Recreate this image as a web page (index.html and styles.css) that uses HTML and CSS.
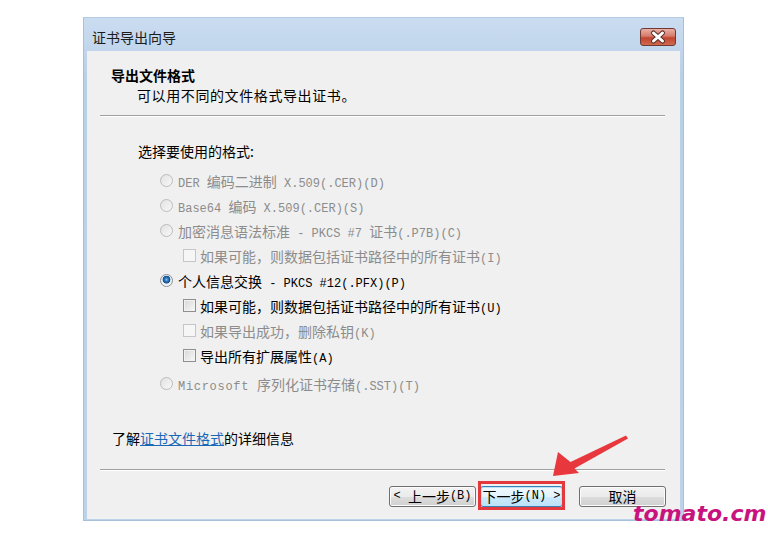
FILE: index.html
```html
<!DOCTYPE html>
<html lang="zh-CN">
<head>
    <meta charset="UTF-8">
    <title>证书导出向导</title>
    <link rel="stylesheet" href="styles.css">
</head>
<body>
    <div class="window">
        <div class="titlebar">
            <span class="title">证书导出向导</span>
            <div class="close">
                <svg width="34" height="16" viewBox="0 0 34 16">
                    <path d="M12.5 4 L21.5 12 M21.5 4 L12.5 12" stroke="#5b3029" stroke-width="5" stroke-linecap="round"/>
                    <path d="M12.5 4 L21.5 12 M21.5 4 L12.5 12" stroke="#ffffff" stroke-width="3" stroke-linecap="round"/>
                </svg>
            </div>
        </div>
        <div class="panel">
            <div class="header">
                <div class="header-title">导出文件格式</div>
                <div class="header-desc">可以用不同的文件格式导出证书。</div>
            </div>
            <div class="sep"></div>

            <div class="prompt">选择要使用的格式:</div>
            <div class="options">
                <div class="opt disabled"><span class="rb"></span><span><span class="en">DER </span>编码二进制<span class="en"> X.509(.CER)(D)</span></span></div>
                <div class="opt disabled"><span class="rb"></span><span><span class="en">Base64 </span>编码<span class="en"> X.509(.CER)(S)</span></span></div>
                <div class="opt disabled"><span class="rb"></span><span>加密消息语法标准<span class="en"> - PKCS #7 </span>证书<span class="en">(.P7B)(C)</span></span></div>
                <div class="opt sub disabled"><span class="cb"></span><span>如果可能，则数据包括证书路径中的所有证书<span class="en">(I)</span></span></div>
                <div class="opt"><span class="rb checked"></span><span>个人信息交换<span class="en"> - PKCS #12(.PFX)(P)</span></span></div>
                <div class="opt sub"><span class="cb"></span><span>如果可能，则数据包括证书路径中的所有证书<span class="en">(U)</span></span></div>
                <div class="opt sub disabled"><span class="cb"></span><span>如果导出成功，删除私钥<span class="en">(K)</span></span></div>
                <div class="opt sub"><span class="cb"></span><span>导出所有扩展属性<span class="en">(A)</span></span></div>
                <div class="opt disabled last"><span class="rb"></span><span><span class="en wide">Microsoft </span>序列化证书存储<span class="en">(.SST)(T)</span></span></div>
            </div>

            <div class="info">了解<a href="#">证书文件格式</a>的详细信息</div>
            <div class="sep sep-bottom"></div>

            <div class="buttons">
                <button class="btn back"><span class="en">&lt; </span>上一步<span class="en">(B)</span></button>
                <button class="btn next default marked">下一步<span class="en">(N) &gt;</span></button>
                <button class="btn cancel">取消</button>
            </div>
        </div>
    </div>

    <svg class="arrow" width="82" height="50" viewBox="0 0 82 50">
        <polygon points="3,45 8,21 20.5,31 76,4.5 78,7.5 24.5,37.5 29,42" fill="#e8383d"/>
    </svg>
    <div class="watermark">tomato.cm</div>
</body>
</html>
```

FILE: styles.css
```css
* {
    box-sizing: border-box;
}
body {
    margin: 0;
    padding: 17px 0 0 83px;
    width: 768px;
    height: 539px;
    overflow: hidden;
    position: relative;
    background: #ffffff;
    font-family: "Noto Sans CJK SC", sans-serif;
    font-size: 14px;
    color: #000;
}
.window {
    width: 601px;
    height: 504px;
    display: flex;
    flex-direction: column;
    background: linear-gradient(#cadcf0, #b9d0e9 60px, #bcd3ea);
    border: 1px solid #a9c0da;
    border-top-color: #b4cbe4;
}
.titlebar {
    height: 33px;
    display: flex;
    justify-content: space-between;
    align-items: flex-start;
    padding: 0 7px 0 8px;
}
.title {
    margin-top: 9px;
    line-height: 20px;
    color: #1b1b1b;
}
.close {
    margin-top: 10px;
    width: 36px;
    height: 18px;
    border: 1px solid #6e3a33;
    border-radius: 3px;
    background: linear-gradient(#e9b0a4 0%, #d47a6a 45%, #c24431 55%, #cf6a4d 100%);
    display: flex;
    align-items: center;
    justify-content: center;
}
.close svg {
    display: block;
}
.panel {
    flex: 1;
    margin: 0 3px 1px;
    background: #f0f0f0;
    display: flex;
    flex-direction: column;
}
.header {
    padding: 14px 0 0 24px;
    line-height: 20px;
}
.header-title {
    font-weight: bold;
}
.header-desc {
    padding-left: 26px;
    letter-spacing: 0.6px;
}
.sep {
    margin: 10px 15px 0 13px;
    border-top: 1px solid #a0a0a0;
    border-bottom: 1px solid #ffffff;
}
.prompt {
    margin: 24px 0 0 51px;
    line-height: 20px;
}
.options {
    margin: 7px 0 0 73px;
}
.opt {
    height: 25px;
    display: flex;
    align-items: center;
    gap: 5px;
    white-space: nowrap;
}
.opt.sub {
    padding-left: 23px;
    gap: 4px;
}
.opt.last {
    margin-top: 3px;
}
.opt.disabled {
    color: #8c8c8c;
}
.en {
    font-family: "Liberation Mono", monospace;
    font-size: 12px;
    white-space: pre;
}
.en.wide {
    letter-spacing: 0.7px;
}
.rb {
    width: 13px;
    height: 13px;
    border-radius: 50%;
    border: 1px solid #bcbcbc;
    background: linear-gradient(135deg, #e2e2e2, #f8f8f8);
    flex: none;
}
.rb.checked {
    border-color: #8a8f95;
    background: radial-gradient(circle at 50% 42%, #8cc4f0 0, #2f7dc4 1.6px, #134d8a 3.6px, #e7ecf1 4.2px, #f7f7f7 6px);
}
.cb {
    width: 13px;
    height: 13px;
    border: 1px solid #8e8f8f;
    background: linear-gradient(135deg, #d6d6d6, #f9f9f9);
    box-shadow: inset 0 0 0 1px #f2f2f2;
    flex: none;
}
.disabled .cb {
    border-color: #c6c6c6;
    background: #f6f6f6;
    box-shadow: none;
}
.info {
    margin: 32px 0 0 25px;
    line-height: 20px;
}
.info a {
    color: #1a67b6;
    text-decoration: underline;
}
.sep-bottom {
    margin-top: 21px;
}
.buttons {
    display: flex;
    justify-content: flex-end;
    padding: 0 14px;
    margin-top: 15px;
}
.btn {
    height: 21px;
    padding: 0;
    border: 1px solid #707070;
    border-radius: 3px;
    background: linear-gradient(#f3f3f3 0%, #ebebeb 50%, #dddddd 51%, #d0d0d0 100%);
    box-shadow: inset 0 0 0 1px #fbfbfb;
    font-family: "Noto Sans CJK SC", sans-serif;
    font-size: 14px;
    line-height: 19px;
    color: #000;
    display: flex;
    align-items: center;
    justify-content: center;
    white-space: nowrap;
}
.btn.back {
    width: 87px;
}
.btn.next {
    width: 83px;
    margin-left: 4px;
}
.btn.cancel {
    width: 87px;
    margin-left: 16px;
}
.btn.default {
    border-color: #3c7fb1;
    background: linear-gradient(#f1f9fe 0%, #e3f3fc 50%, #cdeafb 51%, #bde2f7 100%);
    box-shadow: inset 0 0 0 1px #b9e3fa;
}
.marked {
    position: relative;
}
.marked::after {
    content: "";
    position: absolute;
    top: -6px;
    bottom: -4px;
    left: -3px;
    right: -3px;
    border: 3px solid #e3393c;
}
.arrow {
    position: absolute;
    left: 550px;
    top: 431px;
}
.watermark {
    position: absolute;
    left: 633px;
    top: 503px;
    font-family: "DejaVu Sans", sans-serif;
    font-weight: bold;
    font-style: italic;
    font-size: 22px;
    line-height: 22px;
    color: #c8137e;
}
```
